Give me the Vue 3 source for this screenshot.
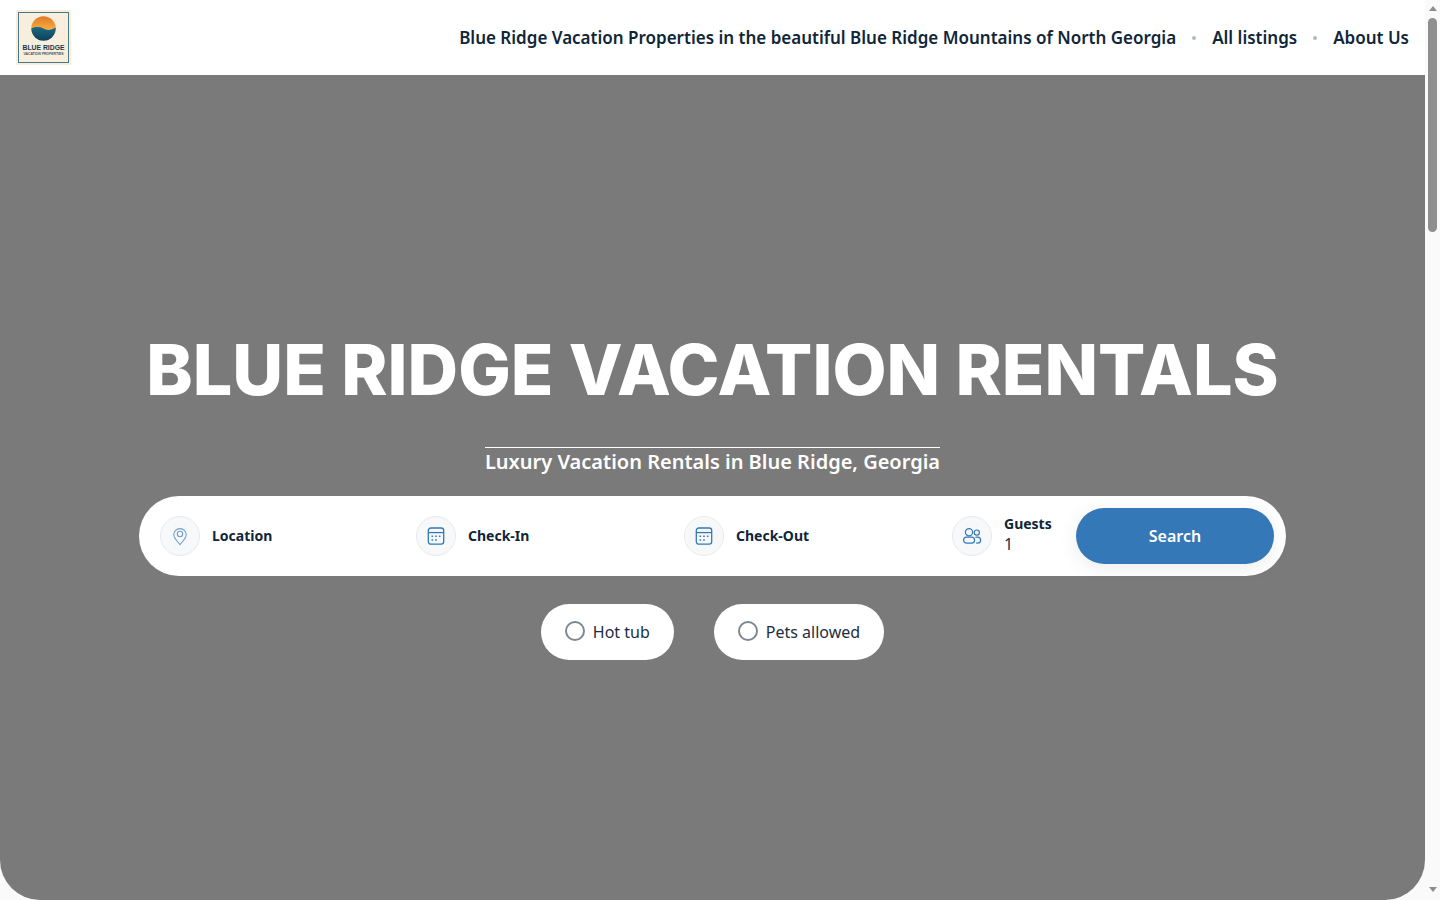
<script setup>
const fields = [
  { label: 'Location', icon: 'pin', w: 'f1' },
  { label: 'Check-In', icon: 'cal', w: 'f2' },
  { label: 'Check-Out', icon: 'cal', w: 'f2' },
]
const chips = ['Hot tub', 'Pets allowed']
</script>

<template>
  <div class="shell">
    <div class="page">
      <header class="nav">
        <div class="logo">
          <div class="logo-inner">
            <svg class="logo-mark" viewBox="0 0 26 26" width="25" height="25" aria-hidden="true">
              <defs>
                <clipPath id="lc"><circle cx="13" cy="13" r="12.7" /></clipPath>
                <linearGradient id="sky" x1="0" y1="0" x2="0" y2="1">
                  <stop offset="0" stop-color="#e5762a" />
                  <stop offset="1" stop-color="#f4ae3d" />
                </linearGradient>
                <linearGradient id="sea" x1="0" y1="0" x2="0" y2="1">
                  <stop offset="0" stop-color="#1b6a80" />
                  <stop offset="1" stop-color="#0f3f5a" />
                </linearGradient>
              </defs>
              <g clip-path="url(#lc)">
                <rect width="26" height="14" fill="url(#sky)" />
                <path d="M0 13 Q7 10 13 13 T26 12 V26 H0 Z" fill="url(#sea)" />
              </g>
            </svg>
            <span class="logo-t1">BLUE RIDGE</span>
            <span class="logo-t2">VACATION PROPERTIES</span>
          </div>
        </div>
        <nav class="links">
          <a>Blue Ridge Vacation Properties in the beautiful Blue Ridge Mountains of North Georgia</a>
          <i class="dot"></i>
          <a>All listings</a>
          <i class="dot"></i>
          <a>About Us</a>
        </nav>
      </header>

      <section class="hero">
        <h1>BLUE RIDGE VACATION RENTALS</h1>
        <p class="sub">Luxury Vacation Rentals in Blue Ridge, Georgia</p>
        <div class="search">
          <div v-for="f in fields" :key="f.label" class="field" :class="f.w">
            <span class="ic">
              <svg v-if="f.icon === 'pin'" viewBox="0 0 20 20" width="20" height="20" fill="none" stroke="#6f9fcd" stroke-width="1.1">
                <path d="M10 18.7 C8 16 3.8 12.5 3.8 8.8 a6.2 6.2 0 0 1 12.4 0 C16.2 12.5 12 16 10 18.7Z" stroke-linejoin="round" />
                <circle cx="10" cy="8" r="2.7" />
              </svg>
              <svg v-else viewBox="0 0 20 20" width="20" height="20" fill="none" stroke="#3578b8" stroke-width="1.3">
                <rect x="2.3" y="2" width="15.4" height="16.2" rx="2.6" />
                <path d="M2.3 6.6h15.4" />
                <path d="M5.5 10.3h1.6M9.2 10.3h1.6M12.9 10.3h1.6M5.5 14h1.6M9.2 14h1.6" stroke-width="1.6" />
              </svg>
            </span>
            <span class="lbl">{{ f.label }}</span>
          </div>
          <div class="field f3">
            <span class="ic">
              <svg viewBox="0 0 20 20" width="20" height="20" fill="none" stroke="#3578b8" stroke-width="1.2">
                <circle cx="7" cy="6.2" r="3.6" />
                <circle cx="14.8" cy="6.6" r="2.6" />
                <rect x="1.6" y="11.2" width="11" height="6" rx="3" />
                <path d="M13.4 11.2h2.2a3 3 0 0 1 0 6h-1.4" />
              </svg>
            </span>
            <span class="stack">
              <span class="lbl">Guests</span>
              <span class="val">1</span>
            </span>
          </div>
          <button class="go">Search</button>
        </div>
        <div class="chips">
          <label v-for="c in chips" :key="c" class="chip">
            <span class="radio"></span>
            <span>{{ c }}</span>
          </label>
        </div>
      </section>
    </div>
    <aside class="bar" aria-hidden="true">
      <span class="arrow up"></span>
      <span class="thumb"></span>
      <span class="arrow down"></span>
    </aside>
  </div>
</template>

<style>
html, body { margin: 0; background: #fafafa; overflow: hidden; }
</style>

<style scoped>
.shell {
  display: flex;
  height: 900px;
  overflow: hidden;
}
.page {
  flex: 1;
  min-width: 0;
  font-family: "Noto Sans", sans-serif;
  color: #0f2638;
}
.bar {
  width: 15px;
  flex: none;
  display: flex;
  flex-direction: column;
  align-items: center;
  background: #fafafa;
  padding: 6px 0 8px;
  box-sizing: border-box;
}
.arrow {
  width: 0;
  height: 0;
  border-left: 4.5px solid transparent;
  border-right: 4.5px solid transparent;
}
.up { border-bottom: 5px solid #8d8d8d; }
.down { border-top: 5px solid #8d8d8d; margin-top: auto; }
.thumb {
  margin-top: 7px;
  width: 9px;
  height: 214px;
  border-radius: 5px;
  background: #8f8f8f;
}
.nav {
  height: 75px;
  display: flex;
  align-items: center;
  justify-content: space-between;
  padding: 0 16px;
  background: #fff;
}
.logo {
  width: 55px;
  height: 55px;
  padding: 2px;
  box-sizing: border-box;
  background: #f8eedd;
}
.logo-inner {
  height: 100%;
  box-sizing: border-box;
  border: 1px solid #4b7683;
  display: flex;
  flex-direction: column;
  align-items: center;
  padding-top: 3px;
}
.logo-mark { display: block; }
.logo-t1 {
  font-family: "Liberation Sans", sans-serif;
  font-weight: 700;
  font-size: 6.8px;
  line-height: 8px;
  margin-top: 3px;
  color: #14394d;
  white-space: nowrap;
}
.logo-t2 {
  font-family: "Liberation Sans", sans-serif;
  font-size: 3.4px;
  font-weight: 700;
  line-height: 4px;
  color: #3f5560;
  white-space: nowrap;
}
.links {
  display: flex;
  align-items: center;
  gap: 16px;
  font-size: 17px;
  font-weight: 600;
  line-height: 24px;
  white-space: nowrap;
}
.dot {
  width: 4px;
  height: 4px;
  border-radius: 50%;
  background: #aebbc4;
}
.hero {
  height: 825px;
  box-sizing: border-box;
  padding-top: 255px;
  display: flex;
  flex-direction: column;
  align-items: center;
  background: #7a7a7a;
  border-radius: 0 0 40px 40px;
}
h1 {
  margin: 0;
  font-family: Inter, sans-serif;
  font-size: 70px;
  font-weight: 800;
  line-height: 80px;
  color: #fff;
  white-space: nowrap;
}
.sub {
  margin: 37px 0 0;
  border-top: 1px solid #fff;
  font-size: 20px;
  font-weight: 600;
  line-height: 28px;
  color: #fff;
  white-space: nowrap;
}
.search {
  margin-top: 20px;
  width: 1147px;
  height: 80px;
  box-sizing: border-box;
  padding: 0 12px 0 21px;
  display: flex;
  align-items: center;
  background: #fff;
  border-radius: 40px;
}
.field {
  display: flex;
  align-items: center;
  gap: 12px;
  flex: none;
}
.f1 { width: 256px; }
.f2 { width: 268px; }
.f3 { width: 124px; }
.ic {
  width: 40px;
  height: 40px;
  box-sizing: border-box;
  flex: none;
  display: flex;
  align-items: center;
  justify-content: center;
  border-radius: 50%;
  background: #f6f8f9;
  border: 1px solid #e8ebee;
}
.lbl {
  font-size: 14px;
  font-weight: 700;
  line-height: 20px;
}
.stack {
  display: flex;
  flex-direction: column;
  margin-top: -3px;
}
.val {
  font-size: 16px;
  line-height: 22px;
  margin-top: -1px;
  color: #1c2e3e;
}
.go {
  width: 198px;
  height: 56px;
  flex: none;
  border: 0;
  border-radius: 28px;
  background: #3578b8;
  color: #fff;
  font-family: inherit;
  font-size: 16px;
  font-weight: 600;
  box-shadow: 0 4px 20px rgba(0, 0, 0, 0.08);
}
.chips {
  margin-top: 28px;
  display: flex;
  gap: 40px;
}
.chip {
  height: 56px;
  box-sizing: border-box;
  padding: 0 24px;
  display: flex;
  align-items: center;
  gap: 8px;
  background: #fff;
  border-radius: 28px;
  font-size: 16px;
  color: #1c2e3e;
}
.radio {
  width: 20px;
  height: 20px;
  box-sizing: border-box;
  border: 2px solid #7d8794;
  border-radius: 50%;
  margin-top: -2px;
}
</style>
